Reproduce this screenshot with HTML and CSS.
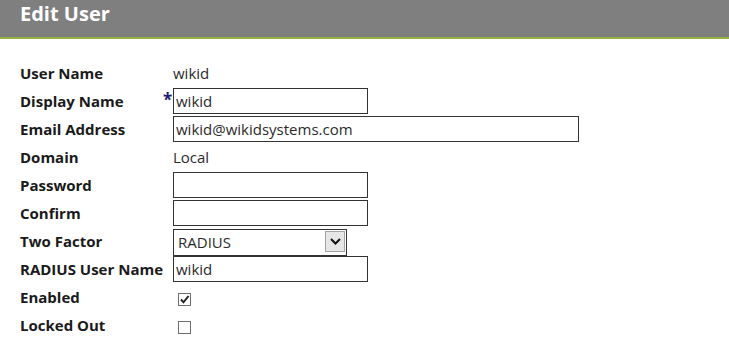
FILE: index.html
```html
<!DOCTYPE html>
<html lang="en">
<head>
    <meta charset="UTF-8">
    <meta name="viewport" content="width=device-width, initial-scale=1.0">
    <title>Edit User</title>
    <link rel="stylesheet" href="styles.css">
</head>
<body>

    <!-- Page header -->
    <div class="page-header">
        <h1>Edit User</h1>
    </div>

    <!-- User form -->
    <div class="user-form">
        <div class="form-label">User Name</div>
        <div class="form-mark"></div>
        <div class="form-value">wikid</div>

        <div class="form-label">Display Name</div>
        <div class="form-mark">*</div>
        <div class="form-value"><input type="text" class="field" value="wikid"></div>

        <div class="form-label">Email Address</div>
        <div class="form-mark"></div>
        <div class="form-value"><input type="text" class="field field-wide" value="wikid@wikidsystems.com"></div>

        <div class="form-label">Domain</div>
        <div class="form-mark"></div>
        <div class="form-value">Local</div>

        <div class="form-label">Password</div>
        <div class="form-mark"></div>
        <div class="form-value"><input type="password" class="field"></div>

        <div class="form-label">Confirm</div>
        <div class="form-mark"></div>
        <div class="form-value"><input type="password" class="field"></div>

        <div class="form-label">Two Factor</div>
        <div class="form-mark"></div>
        <div class="form-value">
            <div class="select-wrap">
                <select class="select-field">
                    <option>RADIUS</option>
                </select>
                <span class="select-arrow">
                    <svg width="11" height="7" viewBox="0 0 11 7"><path d="M1 1l4.5 4.5L10 1" fill="none" stroke="#111" stroke-width="2"/></svg>
                </span>
            </div>
        </div>

        <div class="form-label">RADIUS User Name</div>
        <div class="form-mark"></div>
        <div class="form-value"><input type="text" class="field" value="wikid"></div>

        <div class="form-label">Enabled</div>
        <div class="form-mark"></div>
        <div class="form-value">
            <span class="check-box">
                <svg width="11" height="11" viewBox="0 0 11 11"><path d="M2 5.5l2.5 2.8L9.5 2" fill="none" stroke="#222" stroke-width="2"/></svg>
            </span>
        </div>

        <div class="form-label">Locked Out</div>
        <div class="form-mark"></div>
        <div class="form-value"><span class="check-box"></span></div>
    </div>

</body>
</html>
```

FILE: styles.css
```css
/* Basic Reset */
* {
    margin: 0;
    padding: 0;
    box-sizing: border-box;
}

body {
    font-family: "Open Sans", Arial, sans-serif;
    font-size: 15px;
    color: #222;
    background-color: #ffffff;
}

.page-header {
    height: 39px;
    padding: 0 20px;
    background-color: #7f7f7f;
    border-bottom: 2px solid #92b23c;
}

.page-header h1 {
    font-size: 20px;
    font-weight: 700;
    line-height: 28px;
    color: #ffffff;
}

.user-form {
    display: grid;
    grid-template-columns: 140px 13px auto;
    grid-auto-rows: 28px;
    padding: 20px 20px 0 20px;
    line-height: 28px;
}

.form-label {
    font-weight: 700;
    color: #1a1a1a;
    white-space: nowrap;
}

.form-mark {
    color: #1c1c6e;
    font-weight: 700;
    font-size: 17px;
    line-height: 25px;
    padding-left: 3px;
}

.form-value {
    display: flex;
    align-items: center;
    color: #2b2b2b;
}

.field {
    width: 195px;
    height: 26px;
    padding: 0 2px;
    font-family: "Open Sans", Arial, sans-serif;
    font-size: 15px;
    color: #2b2b2b;
    border: 1px solid #333;
    background-color: #fff;
    outline: none;
}

.field-wide {
    width: 406px;
}

.select-wrap {
    position: relative;
    width: 174px;
    height: 27px;
    margin-top: 1px;
}

.select-field {
    appearance: none;
    width: 100%;
    height: 100%;
    padding: 0 4px;
    font-family: "Open Sans", Arial, sans-serif;
    font-size: 15px;
    color: #2b2b2b;
    border: 1px solid #333;
    border-radius: 0;
    background-color: #fff;
}

.select-arrow {
    position: absolute;
    top: 3px;
    right: 2px;
    width: 20px;
    height: 21px;
    display: flex;
    align-items: center;
    justify-content: center;
    background-color: #e6e6e6;
    border: 1px solid #a5a5a5;
    pointer-events: none;
}

.check-box {
    display: flex;
    align-items: center;
    justify-content: center;
    width: 13px;
    height: 13px;
    margin: 4px 0 0 5px;
    border: 1px solid #6f6f6f;
    background-color: #fff;
}
```
